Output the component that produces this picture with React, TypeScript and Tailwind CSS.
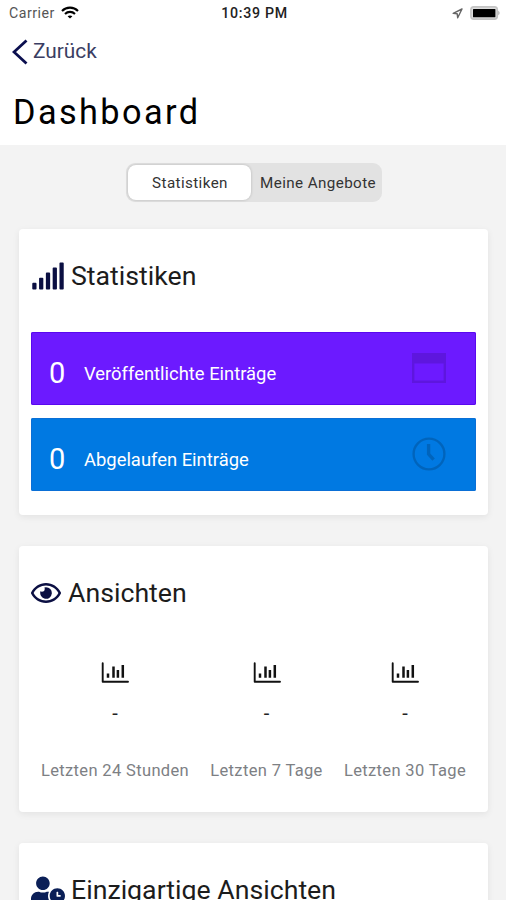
import React from "react";
import { FaRegEye, FaSignal, FaUserClock } from "react-icons/fa";

interface CardProps {
  icon: React.ReactNode;
  title: string;
  className: string;
  children?: React.ReactNode;
}

interface EntryRowProps {
  count: number;
  label: string;
  className: string;
  icon: React.ReactNode;
}

const VIEWS = [
  { label: "Letzten 24 Stunden", value: "-" },
  { label: "Letzten 7 Tage", value: "-" },
  { label: "Letzten 30 Tage", value: "-" },
];

function WifiIcon() {
  return (
    <svg width="18" height="13" viewBox="0 0 18 13" fill="none" stroke="#000" strokeWidth="2.1">
      <path d="M1 4.9C5.4.5 12.6.5 17 4.9" />
      <path d="M4 7.9c2.8-2.7 7.2-2.7 10 0" />
      <path d="M9 12.6 6.6 10.3c1.3-1.2 3.5-1.2 4.8 0L9 12.6Z" fill="#000" stroke="none" />
    </svg>
  );
}

function LocationIcon() {
  return (
    <svg width="11" height="11" viewBox="0 0 11 11" fill="none" stroke="#666" strokeWidth="1.4" strokeLinejoin="round">
      <path d="M10 1 1.2 5.4l4 .4.5 4L10 1Z" />
    </svg>
  );
}

function BatteryIcon() {
  return (
    <svg width="30" height="14" viewBox="0 0 30 14">
      <rect x="0.9" y="0.9" width="26.4" height="12.2" rx="2.8" fill="#ddd" stroke="#c4c4c4" strokeWidth="1.6" />
      <rect x="3" y="3" width="22.4" height="8.2" rx="0.5" fill="#000" />
      <path d="M28.3 4.8c1.7.8 1.7 3.6 0 4.4V4.8Z" fill="#aaa" />
    </svg>
  );
}

function WindowIcon() {
  return (
    <svg width="34" height="30" viewBox="0 0 34 30" fill="none" stroke="#000" strokeOpacity="0.13" strokeWidth="2.4">
      <path d="M1.2 10.5v18.3h31.6V10.5" />
      <path d="M0 0h34v10.5H0z" fill="#000" fillOpacity="0.13" stroke="none" />
    </svg>
  );
}

function ClockIcon() {
  return (
    <svg width="34" height="34" viewBox="0 0 34 34" fill="none" stroke="#000" strokeOpacity="0.17">
      <circle cx="17" cy="17" r="15.4" strokeWidth="2.4" />
      <path d="M16.6 7v10.2l5 5.4" strokeWidth="3.4" />
    </svg>
  );
}

function ChartIcon() {
  return (
    <svg width="28" height="22" viewBox="0 0 28 22" fill="none" stroke="#111">
      <path d="M1.7 2.2v18.6H27" strokeWidth="1.9" strokeLinecap="round" strokeLinejoin="round" />
      <path d="M7 12.5v4.3M12.5 5.5v11.3M16.9 9v7.8M21.8 4v12.8" strokeWidth="2.5" />
    </svg>
  );
}

function EntryRow({ count, label, className, icon }: EntryRowProps) {
  return (
    <div className={`flex h-[73px] items-center rounded-[2px] pr-[30px] pl-[18px] text-white ${className}`}>
      <span className="w-[35px] pt-[9px] text-[29px] leading-none">{count}</span>
      <span className="flex-1 pt-[12px] text-[18.4px] leading-none whitespace-nowrap">{label}</span>
      <span className="pb-[2px]">{icon}</span>
    </div>
  );
}

function Card({ icon, title, className, children }: CardProps) {
  return (
    <section className={`ml-[19px] w-[469px] shrink-0 rounded-[4px] bg-white px-3 shadow-[0_2px_7px_rgba(0,0,0,0.07)] ${className}`}>
      <h2 className="flex h-8 items-center text-[26.7px] leading-8 whitespace-nowrap text-[#1c1c1c]">
        {icon}
        {title}
      </h2>
      {children}
    </section>
  );
}

export default function App() {
  return (
    <div className="flex h-[900px] w-[506px] flex-col overflow-hidden bg-[#f3f3f3] font-['Roboto',sans-serif]">
      <header className="h-[145px] shrink-0 bg-white">
        <div className="grid h-[26px] grid-cols-3 items-center pr-[6px] pl-[9px] text-[14.2px] leading-none">
          <div className="flex items-center gap-[6px] tracking-[0.5px] text-[#555]">
            Carrier
            <WifiIcon />
          </div>
          <div className="text-center font-medium tracking-[0.7px] whitespace-nowrap text-[#222]">10:39 PM</div>
          <div className="flex items-center justify-end gap-[7px]">
            <LocationIcon />
            <BatteryIcon />
          </div>
        </div>
        <a className="flex h-[52px] items-center gap-[5px] pl-3 text-[20.8px] text-[#3a3d62]">
          <svg width="16" height="26" viewBox="0 0 16 26" fill="none" stroke="#0b0f4f" strokeWidth="2.8">
            <path d="M14.5 1.5 2 13l12.5 11.5" />
          </svg>
          Zurück
        </a>
        <h1 className="pt-[13px] pl-[13px] text-[34.3px] leading-[42px] tracking-[2.4px] text-black">Dashboard</h1>
      </header>

      <div className="mt-[18px] ml-[126px] flex h-[39px] w-[256px] shrink-0 rounded-[9px] bg-[#e2e2e2] p-[2px] text-[15.2px] tracking-[0.4px] text-[#333]">
        <button className="w-[123px] rounded-[8px] bg-white pt-px pl-px shadow-[0_0_3px_rgba(0,0,0,0.2)]">
          Statistiken
        </button>
        <button className="flex-1 pt-px pl-[5px] whitespace-nowrap">Meine Angebote</button>
      </div>

      <Card
        title="Statistiken"
        icon={<FaSignal className="mr-[6px] h-[28px] w-[34px] text-[#0b0f42]" />}
        className="mt-[27px] h-[286px] pt-[31px]"
      >
        <div className="mt-10 flex flex-col gap-[13px]">
          <EntryRow
            count={0}
            label="Veröffentlichte Einträge"
            className="bg-[#6c1aff] ring-1 ring-[#5a08ee] ring-inset"
            icon={<WindowIcon />}
          />
          <EntryRow
            count={0}
            label="Abgelaufen Einträge"
            className="bg-[#0079e2] ring-1 ring-[#0a6fd6] ring-inset"
            icon={<ClockIcon />}
          />
        </div>
      </Card>

      <Card
        title="Ansichten"
        icon={<FaRegEye className="mr-[7px] size-[30px] text-[#0b0f42]" />}
        className="mt-[31px] h-[266px] pt-[31px]"
      >
        <div className="mt-[52px] flex justify-between px-[10px]">
          {VIEWS.map((view) => (
            <div key={view.label} className="flex flex-col items-center">
              <ChartIcon />
              <span className="mt-[14px] text-[20px] leading-8 text-[#222]">{view.value}</span>
              <span className="mt-[30px] text-[16.5px] leading-6 tracking-[0.35px] whitespace-nowrap text-[#7d8084]">
                {view.label}
              </span>
            </div>
          ))}
        </div>
      </Card>

      <Card
        title="Einzigartige Ansichten"
        icon={<FaUserClock className="mr-[6px] mb-px h-[28px] w-[34px] text-[#0b1f57]" />}
        className="mt-[31px] h-[266px] pt-[31px]"
      />
    </div>
  );
}
